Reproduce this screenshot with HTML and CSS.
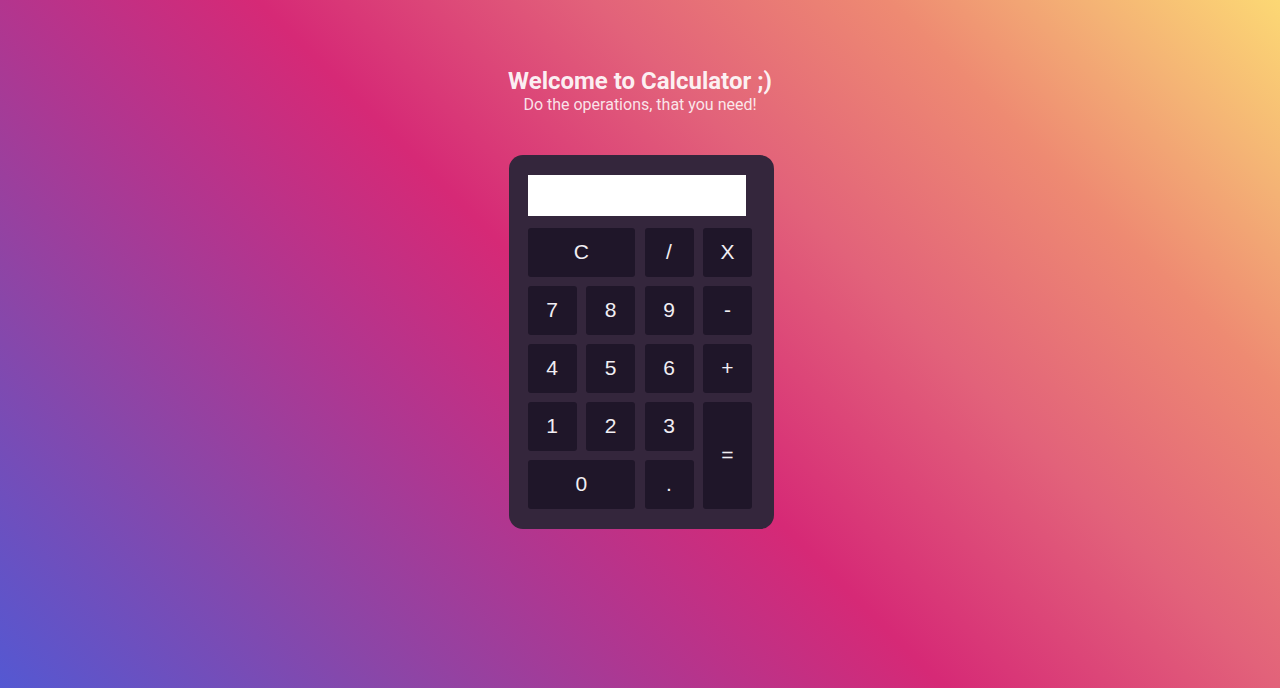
FILE: index.html
```html
<!DOCTYPE html>
<html lang="en">
<head>
<meta charset="utf-8">
<title>Calculator</title>
<link rel="stylesheet" href="styles.css">
</head>
<body>
<main class="page">
  <header class="intro">
    <h1 class="title">Welcome to Calculator ;)</h1>
    <p class="subtitle">Do the operations, that you need!</p>
  </header>
  <section class="calculator">
    <div class="display"></div>
    <div class="keys">
      <button class="key key-wide">C</button>
      <button class="key">/</button>
      <button class="key">X</button>
      <button class="key">7</button>
      <button class="key">8</button>
      <button class="key">9</button>
      <button class="key">-</button>
      <button class="key">4</button>
      <button class="key">5</button>
      <button class="key">6</button>
      <button class="key">+</button>
      <button class="key">1</button>
      <button class="key">2</button>
      <button class="key">3</button>
      <button class="key key-tall">=</button>
      <button class="key key-wide">0</button>
      <button class="key">.</button>
    </div>
  </section>
</main>
</body>
</html>
```
FILE: styles.css
```css
* {
  box-sizing: border-box;
}

html, body {
  margin: 0;
  height: 100%;
}

body {
  background: linear-gradient(45deg,
    #5458d2 0%,
    #8a46a8 20%,
    #b3358e 35%,
    #d62976 48%,
    #e2627a 65%,
    #ee8a72 80%,
    #f4b275 90%,
    #fcd874 100%);
  font-family: Roboto, "Liberation Sans", Arial, sans-serif;
  overflow: hidden;
}

.page {
  min-height: 100%;
  display: flex;
  flex-direction: column;
  align-items: center;
  padding-top: 67px;
}

.intro {
  display: flex;
  flex-direction: column;
  align-items: center;
  margin-bottom: 41px;
}

.title {
  margin: 0;
  font-size: 24px;
  line-height: 28px;
  font-weight: 700;
  color: rgba(255, 255, 255, 0.92);
}

.subtitle {
  margin: 0;
  font-size: 16px;
  line-height: 19px;
  font-weight: 400;
  color: rgba(255, 255, 255, 0.85);
}

.calculator {
  width: 265px;
  padding: 20px 22px 20px 19px;
  background: #34263c;
  border-radius: 14px;
  margin-left: 2px;
}

.display {
  width: 218px;
  height: 41px;
  background: #ffffff;
  margin-bottom: 12px;
}

.keys {
  display: grid;
  grid-template-columns: repeat(4, 49px);
  grid-auto-rows: 48.5px;
  column-gap: 9.5px;
  row-gap: 9.5px;
}

.key {
  border: 0;
  margin: 0;
  padding: 0;
  background: #1f1629;
  color: #f1eef3;
  border-radius: 3px;
  font-family: "Liberation Sans", Arial, sans-serif;
  font-size: 21px;
  display: flex;
  align-items: center;
  justify-content: center;
}

.key-wide {
  grid-column: span 2;
}

.key-tall {
  grid-row: span 2;
}
```
